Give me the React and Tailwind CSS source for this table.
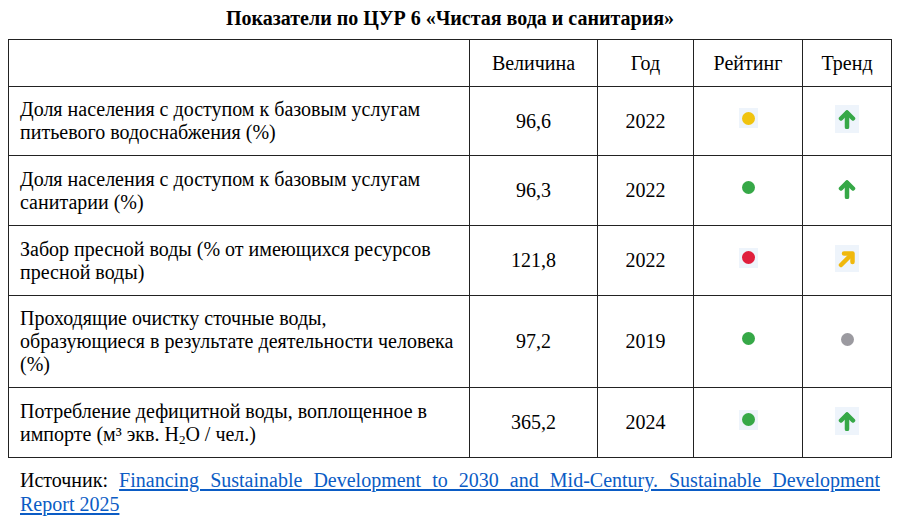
import React from "react";

const rows = [
  { lines: ["Доля населения с доступом к базовым услугам", "питьевого водоснабжения (%)"], value: "96,6", year: "2022", rating: "yellow", trend: "up", h: "h-[69px]", bg: true },
  { lines: ["Доля населения с доступом к базовым услугам", "санитарии (%)"], value: "96,3", year: "2022", rating: "green", trend: "up", h: "h-[70px]", bg: false },
  { lines: ["Забор пресной воды (% от имеющихся ресурсов", "пресной воды)"], value: "121,8", year: "2022", rating: "red", trend: "diag", h: "h-[70px]", bg: true },
  { lines: ["Проходящие очистку сточные воды,", "образующиеся в результате деятельности человека", "(%)"], value: "97,2", year: "2019", rating: "green", trend: "dot", h: "h-[92px]", bg: false },
  { lines: ["Потребление дефицитной воды, воплощенное в"], h2o: true, value: "365,2", year: "2024", rating: "green", trend: "up", h: "h-[70px]", bg: true },
];

const dotColor = {
  yellow: "bg-[#f0c30f]",
  green: "bg-[#36a847]",
  red: "bg-[#e01e3c]",
};

function Rating({ color, bg }) {
  return (
    <span className={`inline-flex h-[20px] w-[19px] items-center justify-center ${bg ? "bg-[#eef4fb]" : ""}`}>
      <span className={`block h-[13px] w-[13px] rounded-full ${dotColor[color]}`} />
    </span>
  );
}

function Trend({ kind, bg }) {
  if (kind === "dot") {
    return <span className="inline-block h-[13px] w-[13px] rounded-full bg-[#9b9aa0]" />;
  }
  if (kind === "diag") {
    return (
      <span className="inline-flex h-[27px] w-[24px] items-center justify-center bg-[#eef4fb]">
        <svg width="18" height="18" viewBox="0 0 18 18">
          <path d="M3 15 L13 5" stroke="#f0b80c" strokeWidth="4.5" strokeLinecap="round" />
          <path d="M6 3.5 H14.5 V12" fill="none" stroke="#f0b80c" strokeWidth="4.5" strokeLinecap="round" strokeLinejoin="round" />
        </svg>
      </span>
    );
  }
  return (
    <span className={`inline-flex h-[28px] w-[24px] items-center justify-center ${bg ? "bg-[#eef4fb]" : ""}`}>
      <svg width="18" height="20" viewBox="0 0 18 20">
        <path d="M9 18 V4" stroke="#36a847" strokeWidth="4.5" strokeLinecap="round" />
        <path d="M3 9.5 L9 3.5 L15 9.5" fill="none" stroke="#36a847" strokeWidth="4.5" strokeLinecap="round" strokeLinejoin="round" />
      </svg>
    </span>
  );
}

export default function App() {
  return (
    <div className="w-[900px] h-[523px] bg-white text-black font-['Liberation_Serif','Times_New_Roman',serif] pt-[6px]">
      <h1 className="text-center text-[20px] font-bold leading-[24px] mb-[9px]">
        Показатели по ЦУР 6 «Чистая вода и санитария»
      </h1>
      <table className="ml-[8px] w-[883px] table-fixed border-collapse text-[20px] leading-[23px]">
        <colgroup>
          <col className="w-[461px]" />
          <col className="w-[128px]" />
          <col className="w-[96px]" />
          <col className="w-[109px]" />
          <col className="w-[89px]" />
        </colgroup>
        <thead>
          <tr className="h-[47px]">
            <th className="border-[1.5px] border-[#222]" />
            <th className="border-[1.5px] border-[#222] font-normal">Величина</th>
            <th className="border-[1.5px] border-[#222] font-normal">Год</th>
            <th className="border-[1.5px] border-[#222] font-normal">Рейтинг</th>
            <th className="border-[1.5px] border-[#222] font-normal">Тренд</th>
          </tr>
        </thead>
        <tbody>
          {rows.map((r, i) => (
            <tr key={i} className={r.h}>
              <td className="border-[1.5px] border-[#222] pl-[11px] pr-[4px] align-middle whitespace-nowrap">
                {r.lines.map((l, j) => (
                  <div key={j}>{l}</div>
                ))}
                {r.h2o && (
                  <div>
                    импорте (м³ экв. H<sub className="text-[13px] align-baseline relative top-[3px]">2</sub>O / чел.)
                  </div>
                )}
              </td>
              <td className="border-[1.5px] border-[#222] text-center">{r.value}</td>
              <td className="border-[1.5px] border-[#222] text-center">{r.year}</td>
              <td className="border-[1.5px] border-[#222] text-center">
                <div className="flex justify-center -mt-[6px]">
                  <Rating color={r.rating} bg={r.bg} />
                </div>
              </td>
              <td className="border-[1.5px] border-[#222] text-center">
                <div className="flex justify-center -mt-[4px]">
                  <Trend kind={r.trend} bg={r.bg} />
                </div>
              </td>
            </tr>
          ))}
        </tbody>
      </table>
      <p className="mx-[20px] mt-[10px] text-[20px] leading-[24px] text-justify">
        Источник:{" "}
        <a href="#" className="text-[#0b5cc5] underline underline-offset-2">
          Financing Sustainable Development to 2030 and Mid-Century. Sustainable Development Report 2025
        </a>
      </p>
    </div>
  );
}
